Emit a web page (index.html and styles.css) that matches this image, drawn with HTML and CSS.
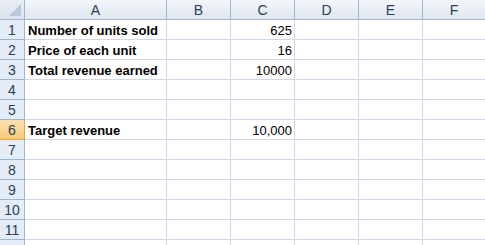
FILE: index.html
```html
<!DOCTYPE html>
<html lang="en">
<head>
    <meta charset="UTF-8">
    <title>Sheet1</title>
    <link rel="stylesheet" href="styles.css">
</head>
<body>
    <div class="sheet">
        <!-- column headers -->
        <div class="corner"></div>
        <div class="col-head">A</div>
        <div class="col-head">B</div>
        <div class="col-head">C</div>
        <div class="col-head">D</div>
        <div class="col-head">E</div>
        <div class="col-head last">F</div>

        <div class="row-head">1</div>
        <div class="cell label">Number of units sold</div>
        <div class="cell"></div>
        <div class="cell num">625</div>
        <div class="cell"></div><div class="cell"></div><div class="cell last"></div>

        <div class="row-head">2</div>
        <div class="cell label">Price of each unit</div>
        <div class="cell"></div>
        <div class="cell num">16</div>
        <div class="cell"></div><div class="cell"></div><div class="cell last"></div>

        <div class="row-head">3</div>
        <div class="cell label">Total revenue earned</div>
        <div class="cell"></div>
        <div class="cell num">10000</div>
        <div class="cell"></div><div class="cell"></div><div class="cell last"></div>

        <div class="row-head">4</div>
        <div class="cell"></div><div class="cell"></div><div class="cell"></div>
        <div class="cell"></div><div class="cell"></div><div class="cell last"></div>

        <div class="row-head">5</div>
        <div class="cell"></div><div class="cell"></div><div class="cell"></div>
        <div class="cell"></div><div class="cell"></div><div class="cell last"></div>

        <div class="row-head active">6</div>
        <div class="cell label">Target revenue</div>
        <div class="cell"></div>
        <div class="cell num">10,000</div>
        <div class="cell"></div><div class="cell"></div><div class="cell last"></div>

        <div class="row-head">7</div>
        <div class="cell"></div><div class="cell"></div><div class="cell"></div>
        <div class="cell"></div><div class="cell"></div><div class="cell last"></div>

        <div class="row-head">8</div>
        <div class="cell"></div><div class="cell"></div><div class="cell"></div>
        <div class="cell"></div><div class="cell"></div><div class="cell last"></div>

        <div class="row-head">9</div>
        <div class="cell"></div><div class="cell"></div><div class="cell"></div>
        <div class="cell"></div><div class="cell"></div><div class="cell last"></div>

        <div class="row-head">10</div>
        <div class="cell"></div><div class="cell"></div><div class="cell"></div>
        <div class="cell"></div><div class="cell"></div><div class="cell last"></div>

        <div class="row-head">11</div>
        <div class="cell"></div><div class="cell"></div><div class="cell"></div>
        <div class="cell"></div><div class="cell"></div><div class="cell last"></div>

        <!-- row 12 is only partly in view -->
        <div class="row-head"></div>
        <div class="cell"></div><div class="cell"></div><div class="cell"></div>
        <div class="cell"></div><div class="cell"></div><div class="cell last"></div>
    </div>
</body>
</html>
```

FILE: styles.css
```css
body {
    margin: 0;
    background: #ffffff;
    font-family: "Liberation Sans", Arial, sans-serif;
    font-size: 13px;
    overflow: hidden;
}
.sheet {
    display: grid;
    grid-template-columns: 25px 142px 64px 64px 64px 64px 62px;
    grid-auto-rows: 20px;
    width: 485px;
    height: 245px;
    overflow: hidden;
}
.sheet > div {
    box-sizing: border-box;
    display: flex;
    align-items: center;
    padding-top: 1px;
    white-space: nowrap;
}
.corner {
    position: relative;
    background: linear-gradient(#e9eef5, #dbe3ee);
    border-right: 1px solid #9eb6ce;
    border-bottom: 1px solid #9eb6ce;
}
.corner::after {
    content: "";
    position: absolute;
    right: 3px;
    bottom: 3px;
    width: 12px;
    height: 12px;
    background: #b9c8da;
    clip-path: polygon(100% 0, 100% 100%, 0 100%);
}
.col-head {
    justify-content: center;
    background: linear-gradient(#f3f6fa, #dfe6ef);
    border-right: 1px solid #9eb6ce;
    border-bottom: 1px solid #9eb6ce;
    color: #2c3e55;
    font-size: 14px;
}
.col-head.last {
    border-right: none;
}
.row-head {
    justify-content: center;
    background: #e4ecf7;
    border-right: 1px solid #9eb6ce;
    border-bottom: 1px solid #9eb6ce;
    color: #2c3e55;
    font-size: 14px;
}
.row-head.active {
    background: linear-gradient(#fbe3b2, #f7c97d);
    border-right: 1px solid #f2a33a;
    border-bottom: 1px solid #f2a33a;
}
.cell {
    border-right: 1px solid #d0d7e5;
    border-bottom: 1px solid #d0d7e5;
    color: #000000;
    padding-left: 3px;
    padding-right: 2px;
}
.cell.last {
    border-right: none;
}
.label {
    font-weight: bold;
}
.num {
    justify-content: flex-end;
}
```
